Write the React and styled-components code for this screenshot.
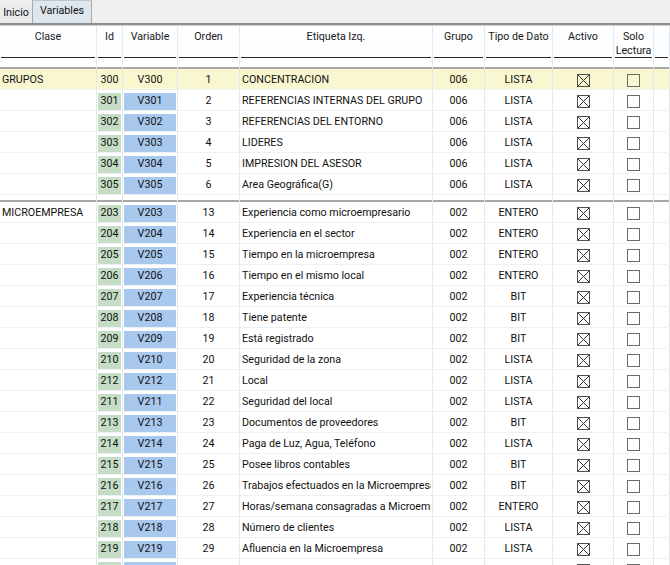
import React from "react";
import styled, { createGlobalStyle, css } from "styled-components";

const GlobalStyle = createGlobalStyle`
  html, body { margin: 0; padding: 0; background: #fff; overflow: hidden; }
  body {
    font-family: Roboto, "Liberation Sans", Arial, sans-serif;
    font-size: 10.7px;
    color: #111;
  }
`;

const COLS = "97px 26px 55px 62px 193px 52px 68px 61px 40px 1fr";
const SEP = "#e4e8ed";

const Page = styled.div`
  width: 670px;
  height: 565px;
  overflow: hidden;
  display: flex;
  flex-direction: column;
`;

const TabBar = styled.div`
  height: 23px;
  flex: none;
  background: #f0f0f0;
  display: flex;
  align-items: flex-end;
  border-bottom: 2px solid #8d8d8d;
  box-shadow: 0 1px 0 #cfd3d6;
  margin-bottom: 1px;
`;

const Tab = styled.div`
  display: flex;
  align-items: center;
  justify-content: center;
  box-sizing: border-box;
  color: #111;
  ${(p) =>
    p.$active
      ? css`
          width: 60px;
          height: 23px;
          padding-bottom: 4px;
          background: #dfe7ee;
          border-left: 1px solid #a3abb3;
          border-right: 1px solid #a3abb3;
          border-top: 1px solid #c0c6cc;
        `
      : css`
          width: 32px;
          height: 20px;
          padding-bottom: 1px;
          background: #ebebeb;
        `}
`;

const Grid = styled.div`
  display: grid;
  grid-template-columns: ${COLS};
  flex: none;
`;

const HeaderRow = styled(Grid)`
  height: 36px;
  background: #fcfdfe;
`;

const HeaderCell = styled.div`
  border-right: 1px solid ${SEP};
  display: flex;
  flex-direction: column;
`;

const HeaderTitle = styled.div`
  height: 31px;
  box-sizing: border-box;
  padding-top: 4px;
  line-height: 14px;
  text-align: center;
  color: #1a1a1a;
  white-space: nowrap;
`;

const HeaderLine = styled.div`
  height: 1px;
  margin: 0 1px 0 1px;
  background: #262626;
`;

const GroupBar = styled(Grid)`
  height: 7px;
`;

const GroupBarCell = styled.div`
  border-right: 1px solid ${SEP};
  padding-top: 5px;
  &::after {
    content: "";
    display: block;
    height: 2px;
    background: #a7a7a7;
  }
`;

const Row = styled(Grid)`
  height: 21px;
  box-sizing: border-box;
  border-bottom: 1px solid #eef1f4;
  background: ${(p) => (p.$selected ? "#f9f7d0" : "#fff")};
`;

const Cell = styled.div`
  border-right: 1px solid ${SEP};
  padding: 3px 1px 0 1px;
  display: flex;
  min-width: 0;
  overflow: hidden;
`;

const Fill = styled.div`
  flex: 1;
  min-width: 0;
  height: 17px;
  display: flex;
  align-items: center;
  justify-content: ${(p) => (p.$align === "left" ? "flex-start" : "center")};
  padding-left: ${(p) => (p.$align === "left" ? "1px" : "0")};
  padding-bottom: 3px;
  box-sizing: border-box;
  white-space: nowrap;
  overflow: hidden;
  background: ${(p) =>
    p.$tone === "green" ? "#c4ddc4" : p.$tone === "blue" ? "#a9c8ee" : "transparent"};
`;

const Box = styled.span`
  width: 13px;
  height: 13px;
  flex: none;
  box-sizing: border-box;
  border: 1px solid ${(p) => (p.$checked ? "#505050" : "#6a6a6a")};
  display: inline-flex;
  align-items: center;
  justify-content: center;
  margin-top: 2px;
`;

const Check = ({ checked }) => (
  <Box $checked={checked}>
    {checked && (
      <svg width="11" height="11" viewBox="0 0 11 11">
        <path d="M0 0 L11 11 M11 0 L0 11" stroke="#333" strokeWidth="1" />
      </svg>
    )}
  </Box>
);

const headers = [
  "Clase",
  "Id",
  "Variable",
  "Orden",
  "Etiqueta Izq.",
  "Grupo",
  "Tipo de Dato",
  "Activo",
  ["Solo", "Lectura"],
  "",
];

const groups = [
  {
    name: "GRUPOS",
    rows: [
      ["300", "1", "CONCENTRACION", "006", "LISTA"],
      ["301", "2", "REFERENCIAS INTERNAS DEL GRUPO", "006", "LISTA"],
      ["302", "3", "REFERENCIAS DEL ENTORNO", "006", "LISTA"],
      ["303", "4", "LIDERES", "006", "LISTA"],
      ["304", "5", "IMPRESION DEL ASESOR", "006", "LISTA"],
      ["305", "6", "Area Geográfica(G)", "006", "LISTA"],
    ],
  },
  {
    name: "MICROEMPRESA",
    rows: [
      ["203", "13", "Experiencia como microempresario", "002", "ENTERO"],
      ["204", "14", "Experiencia en el sector", "002", "ENTERO"],
      ["205", "15", "Tiempo en la microempresa", "002", "ENTERO"],
      ["206", "16", "Tiempo en el mismo local", "002", "ENTERO"],
      ["207", "17", "Experiencia técnica", "002", "BIT"],
      ["208", "18", "Tiene patente", "002", "BIT"],
      ["209", "19", "Está registrado", "002", "BIT"],
      ["210", "20", "Seguridad de la zona", "002", "LISTA"],
      ["212", "21", "Local", "002", "LISTA"],
      ["211", "22", "Seguridad del local", "002", "LISTA"],
      ["213", "23", "Documentos de proveedores", "002", "BIT"],
      ["214", "24", "Paga de Luz, Agua, Teléfono", "002", "LISTA"],
      ["215", "25", "Posee libros contables", "002", "BIT"],
      ["216", "26", "Trabajos efectuados en la Microempresa", "002", "BIT"],
      ["217", "27", "Horas/semana consagradas a Microempresa", "002", "ENTERO"],
      ["218", "28", "Número de clientes", "002", "LISTA"],
      ["219", "29", "Afluencia en la Microempresa", "002", "LISTA"],
      { partial: true },
    ],
  },
];

const DataRow = ({ groupName, row, selected }) => {
  const partial = !Array.isArray(row);
  const [id, orden, etiqueta, grupo, tipo] = partial ? ["", "", "", "", ""] : row;
  return (
    <Row $selected={selected}>
      <Cell>
        <Fill $align="left">{groupName}</Fill>
      </Cell>
      <Cell>
        <Fill $tone={selected ? null : "green"}>{id}</Fill>
      </Cell>
      <Cell>
        <Fill $tone={selected ? null : "blue"}>{partial ? "" : `V${id}`}</Fill>
      </Cell>
      <Cell>
        <Fill>{orden}</Fill>
      </Cell>
      <Cell>
        <Fill $align="left">{etiqueta}</Fill>
      </Cell>
      <Cell>
        <Fill>{grupo}</Fill>
      </Cell>
      <Cell>
        <Fill>{tipo}</Fill>
      </Cell>
      <Cell>
        <Fill>
          <Check checked />
        </Fill>
      </Cell>
      <Cell>
        <Fill>
          <Check />
        </Fill>
      </Cell>
      <Cell />
    </Row>
  );
};

export default function App() {
  return (
    <Page>
      <GlobalStyle />
      <TabBar>
        <Tab>Inicio</Tab>
        <Tab $active>Variables</Tab>
      </TabBar>
      <HeaderRow>
        {headers.map((h, i) => (
          <HeaderCell key={i}>
            <HeaderTitle>
              {Array.isArray(h) ? h.map((l) => <div key={l}>{l}</div>) : h}
            </HeaderTitle>
            <HeaderLine />
          </HeaderCell>
        ))}
      </HeaderRow>
      {groups.map((g, gi) => (
        <React.Fragment key={g.name}>
          <GroupBar>
            {headers.map((_, i) => (
              <GroupBarCell key={i} />
            ))}
          </GroupBar>
          {g.rows.map((r, ri) => (
            <DataRow
              key={ri}
              row={r}
              groupName={ri === 0 ? g.name : ""}
              selected={gi === 0 && ri === 0}
            />
          ))}
        </React.Fragment>
      ))}
    </Page>
  );
}
